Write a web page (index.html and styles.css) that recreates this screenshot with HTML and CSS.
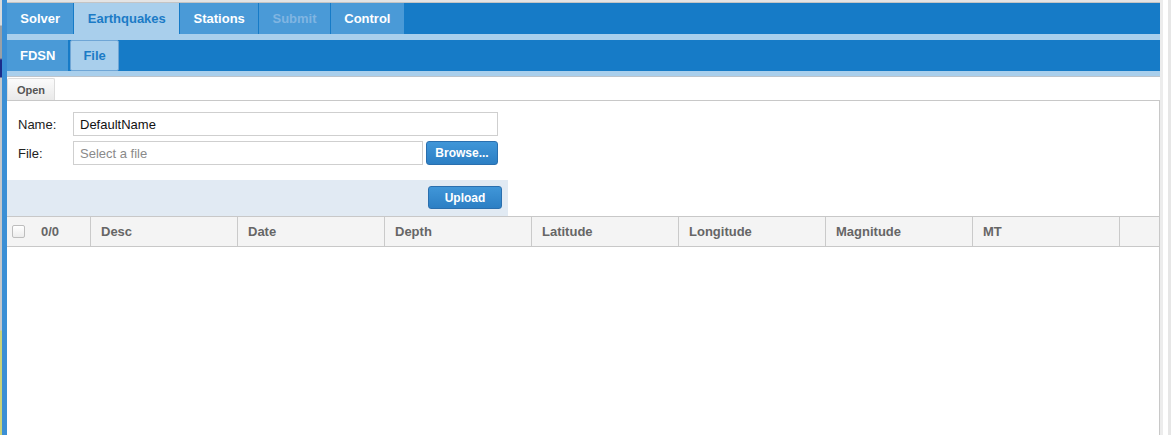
FILE: index.html
```html
<!DOCTYPE html>
<html>
<head>
<meta charset="utf-8">
<link rel="stylesheet" href="styles.css">
</head>
<body>
<div class="frame">
  <div class="edge-left"></div>
  <div class="app">
    <div class="topline"></div>
    <nav class="tabbar">
      <span class="tab">Solver</span>
      <span class="tab active">Earthquakes</span>
      <span class="tab">Stations</span>
      <span class="tab disabled">Submit</span>
      <span class="tab">Control</span>
    </nav>
    <div class="strip strip-main"></div>
    <nav class="tabbar sub">
      <span class="tab">FDSN</span>
      <span class="tab active boxed">File</span>
    </nav>
    <div class="strip strip-sub"></div>
    <div class="toolbar"><button class="btn-open">Open</button></div>
    <section class="panel">
      <div class="form">
        <div class="row">
          <label class="lbl">Name:</label>
          <input class="field wide" type="text" value="DefaultName">
        </div>
        <div class="row">
          <label class="lbl">File:</label>
          <input class="field narrow" type="text" placeholder="Select a file">
          <button class="btn-blue browse">Browse...</button>
        </div>
      </div>
      <div class="band"><button class="btn-blue upload">Upload</button></div>
      <div class="thead">
        <div class="th first"><span class="cb"></span><span class="count">0/0</span></div>
        <div class="th">Desc</div>
        <div class="th">Date</div>
        <div class="th">Depth</div>
        <div class="th">Latitude</div>
        <div class="th">Longitude</div>
        <div class="th">Magnitude</div>
        <div class="th">MT</div>
        <div class="th"></div>
      </div>
      <div class="tbody"></div>
    </section>
  </div>
  <div class="scroll"></div>
</div>
</body>
</html>
```
FILE: styles.css
```css
* { box-sizing: border-box; }
html, body { margin: 0; padding: 0; height: 100%; }
body {
  font-family: "Liberation Sans", Arial, sans-serif;
  font-size: 13px;
  color: #222;
  background: #fff;
  overflow: hidden;
}
.frame {
  display: flex;
  height: 435px;
  width: 1171px;
}
.edge-left {
  width: 2px;
  background: linear-gradient(#d8dadc 0, #d8dadc 25px, #9aa0a6 26px, #9aa0a6 58px, #1b2c8a 60px, #1b2c8a 77px, #c4c8cc 78px, #c4c8cc 330px, #c9d27a 331px, #c9d27a 435px);
}
.app {
  display: flex;
  flex-direction: column;
  border-left: 5px solid #3b8fd5;
  width: 1158px;
}
.topline {
  height: 3px;
  background: #e4e4e4;
  border-bottom: 1px solid #c4c4c4;
}
.tabbar {
  display: flex;
  gap: 1px;
  height: 31px;
  background: #167bc7;
}
.tab {
  display: flex;
  align-items: center;
  padding: 0 13.35px 1px;
  background: #4a9ad7;
  color: #fff;
  font-weight: bold;
  font-size: 13px;
}
.tab.active {
  background: #a9cfec;
  color: #1b7bc6;
}
.tab.disabled { color: #80b5e2; }
.tabbar.sub .tab { height: 31px; padding: 0 13px 1px; }
.tabbar.sub .tab.boxed {
  border: 1px solid #6fa6d6;
  border-radius: 2px;
  padding: 0 12px;
  margin-left: 1px;
}
.strip { background: #a9cfec; }
.strip-main { height: 6px; }
.strip-sub { height: 6px; border-bottom: 1px solid #bcc4cc; }
.toolbar {
  height: 24px;
  padding-top: 1px;
  border-bottom: 1px solid #c8c8c8;
  display: flex;
}
.btn-open {
  width: 48px;
  height: 22px;
  border: 1px solid #dcdcdc;
  border-bottom: none;
  border-radius: 2px 2px 0 0;
  background: linear-gradient(#fbfbfb, #e9e9e9);
  color: #555;
  font-family: inherit;
  font-weight: bold;
  font-size: 11px;
  padding: 0;
}
.panel {
  flex: 1;
  border-right: 1px solid #c8c8c8;
  display: flex;
  flex-direction: column;
  width: 1153px;
}
.form {
  padding: 11px 0 0 11px;
  display: flex;
  flex-direction: column;
  gap: 5px;
  height: 79px;
}
.row {
  display: flex;
  align-items: center;
  height: 24px;
}
.lbl {
  width: 55px;
  font-size: 13px;
  color: #222;
}
.field {
  height: 24px;
  border: 1px solid #cfcfcf;
  font-family: inherit;
  font-size: 13px;
  padding: 0 6px;
  color: #111;
  background: #fff;
}
.field::placeholder { color: #8a8a8a; }
.wide { width: 425px; }
.narrow { width: 350px; }
.btn-blue {
  border: 1px solid #2a6fae;
  border-radius: 3px;
  background: linear-gradient(#4096d8, #2c7fc4);
  color: #fff;
  font-family: inherit;
  font-weight: bold;
  font-size: 12px;
  padding: 0;
}
.browse {
  width: 72px;
  height: 24px;
  margin-left: 3px;
}
.band {
  width: 501px;
  height: 36px;
  background: #e1eaf3;
  display: flex;
  justify-content: flex-end;
  padding: 6px 6px 0 0;
}
.upload {
  width: 74px;
  height: 23px;
}
.thead {
  display: grid;
  grid-template-columns: 83px repeat(7, 147px) 1fr;
  height: 31px;
  background: #f4f4f4;
  border-top: 1px solid #c8c8c8;
  border-bottom: 1px solid #c8c8c8;
}
.th {
  display: flex;
  align-items: center;
  padding-left: 10px;
  border-left: 1px solid #cacaca;
  color: #666;
  font-weight: bold;
  font-size: 13px;
}
.th.first {
  border-left: none;
  padding-left: 5px;
}
.cb {
  width: 13px;
  height: 13px;
  border: 1px solid #bdbdbd;
  border-radius: 2px;
  background: linear-gradient(#fff, #ececec);
}
.count { margin-left: 16px; }
.tbody { flex: 1; }
.scroll {
  width: 11px;
  border-left: 3px solid #ececec;
  border-right: 3px solid #e6e6e6;
  background: #fff;
}
```
